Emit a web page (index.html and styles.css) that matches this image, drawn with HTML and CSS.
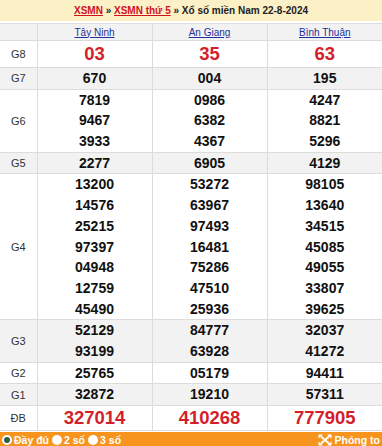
FILE: index.html
```html
<!DOCTYPE html>
<html lang="vi">
<head>
    <meta charset="UTF-8">
    <meta name="viewport" content="width=device-width, initial-scale=1.0">
    <title>XSMN thứ 5 - Xổ số miền Nam 22-8-2024</title>
    <link rel="stylesheet" href="styles.css">
</head>
<body>

<div class="title-bar">
    <a href="#">XSMN</a> » <a href="#">XSMN thứ 5</a> » Xổ số miền Nam 22-8-2024
</div>

<table class="result">
    <colgroup>
        <col class="col-label">
        <col class="col-prov">
        <col class="col-prov">
        <col class="col-prov">
    </colgroup>
    <tr class="head">
        <td></td>
        <td><a href="#">Tây Ninh</a></td>
        <td><a href="#">An Giang</a></td>
        <td><a href="#">Bình Thuận</a></td>
    </tr>
    <tr class="g8">
        <td class="label">G8</td>
        <td class="big">03</td>
        <td class="big">35</td>
        <td class="big">63</td>
    </tr>
    <tr class="alt">
        <td class="label">G7</td>
        <td><div>670</div></td>
        <td><div>004</div></td>
        <td><div>195</div></td>
    </tr>
    <tr>
        <td class="label">G6</td>
        <td><div>7819</div><div>9467</div><div>3933</div></td>
        <td><div>0986</div><div>6382</div><div>4367</div></td>
        <td><div>4247</div><div>8821</div><div>5296</div></td>
    </tr>
    <tr class="alt">
        <td class="label">G5</td>
        <td><div>2277</div></td>
        <td><div>6905</div></td>
        <td><div>4129</div></td>
    </tr>
    <tr>
        <td class="label">G4</td>
        <td><div>13200</div><div>14576</div><div>25215</div><div>97397</div><div>04948</div><div>12759</div><div>45490</div></td>
        <td><div>53272</div><div>63967</div><div>97493</div><div>16481</div><div>75286</div><div>47510</div><div>25936</div></td>
        <td><div>98105</div><div>13640</div><div>34515</div><div>45085</div><div>49055</div><div>33807</div><div>39625</div></td>
    </tr>
    <tr class="alt">
        <td class="label">G3</td>
        <td><div>52129</div><div>93199</div></td>
        <td><div>84777</div><div>63928</div></td>
        <td><div>32037</div><div>41272</div></td>
    </tr>
    <tr>
        <td class="label">G2</td>
        <td><div>25765</div></td>
        <td><div>05179</div></td>
        <td><div>94411</div></td>
    </tr>
    <tr class="alt">
        <td class="label">G1</td>
        <td><div>32872</div></td>
        <td><div>19210</div></td>
        <td><div>57311</div></td>
    </tr>
    <tr class="db">
        <td class="label">ĐB</td>
        <td class="big">327014</td>
        <td class="big">410268</td>
        <td class="big">777905</td>
    </tr>
</table>

<div class="tool-bar">
    <div class="modes">
        <label class="mode"><span class="dot on"></span>Đầy đủ</label>
        <label class="mode"><span class="dot"></span>2 số</label>
        <label class="mode"><span class="dot"></span>3 số</label>
    </div>
    <a class="zoom" href="#">
        <svg width="14" height="12" viewBox="0 0 14 12">
            <path d="M3 2.5 L11 9.5 M11 2.5 L3 9.5" stroke="#fff" stroke-width="1.8" fill="none"/>
            <path d="M0.5 0.5 H5 L0.5 4.5 Z M13.5 0.5 H9 L13.5 4.5 Z M0.5 11.5 H5 L0.5 7.5 Z M13.5 11.5 H9 L13.5 7.5 Z" fill="#fff"/>
        </svg>
        Phóng to
    </a>
</div>

</body>
</html>
```

FILE: styles.css
```css
body { margin: 0; font-family: "Liberation Sans", Arial, sans-serif; color: #222; background: #fff; }
a { color: inherit; }

.title-bar { background: #fcf0c6; height: 21px; line-height: 21px; text-align: center; font-size: 10px; font-weight: bold; color: #222; margin-bottom: 2px; }
.title-bar a { color: #d0121e; }

.result { width: 100%; border-collapse: collapse; table-layout: fixed; }
.col-label { width: 37px; }
.result td { border: 1px solid #dcdcdc; text-align: center; padding: 0; font-size: 14px; font-weight: bold; color: #111; }
.result tr td:first-child { border-left: none; }
.result tr td:last-child { border-right: none; }
.result td div { height: 20.7px; line-height: 20.7px; }
.result td.label { font-size: 11px; font-weight: normal; color: #333; }
.result .alt td { background: #f2f2f2; }

.head td { background: #f2f2f2; height: 16px; font-size: 10px; font-weight: normal; }
.head a { color: #1f2f9c; }

.result td.big { font-size: 18.5px; color: #d41f2b; height: 26px; }
.result .db td.big { height: 24px; }

.tool-bar { background: #f7941e; height: 16px; display: flex; justify-content: space-between; align-items: center; color: #fff; font-size: 10.5px; font-weight: bold; padding: 0 2px; margin-top: 1px; }
.modes { display: flex; gap: 3px; }
.mode { display: flex; align-items: center; gap: 2px; }
.dot { width: 10px; height: 10px; border-radius: 50%; background: #fff; box-sizing: border-box; }
.dot.on { background: #2f5e44; border: 2px solid #fff; }
.zoom { display: flex; align-items: center; gap: 3px; text-decoration: none; color: #fff; }
```
